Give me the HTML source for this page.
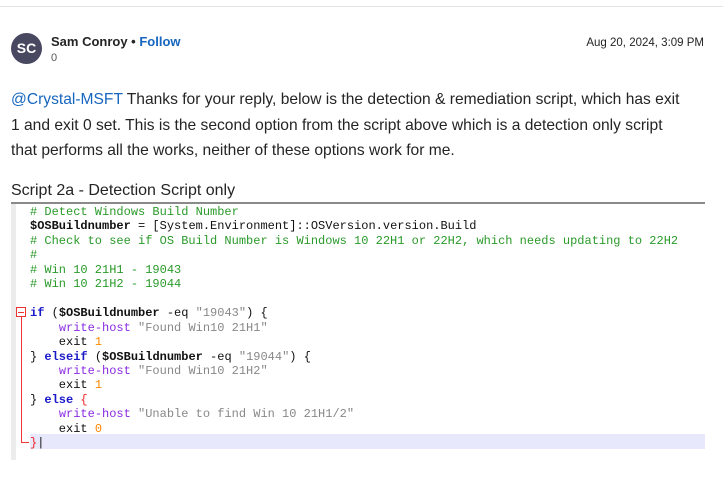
<!DOCTYPE html>
<html><head><style>
body{margin:0;width:723px;height:480px;background:#fff;font-family:"Segoe UI","Liberation Sans",sans-serif;color:#242424;position:relative;overflow:hidden}
.top{position:absolute;left:0;top:6px;width:723px;height:1px;background:#e4e4e4}
.av{position:absolute;left:11px;top:33px;width:31px;height:31px;border-radius:50%;background:#484860;color:#fff;font-weight:bold;font-size:14px;line-height:31px;text-align:center}
.name{position:absolute;left:51px;top:34px;font-size:13px;font-weight:600}
.name span{color:#1666bf}
.zero{position:absolute;left:51px;top:52px;font-size:11px;color:#555}
.date{position:absolute;right:19px;top:37px;font-size:11.5px}
.body{position:absolute;left:11px;top:87px;font-size:15.6px;line-height:25.5px;width:700px}
.body a{color:#1666bf}
.s2{position:absolute;left:11px;top:182px;font-size:16px}
.img{position:absolute;left:11px;top:202px;width:694px;height:256px;border-top:2px solid #8a8a8a}
.gut{position:absolute;left:0;top:0;width:5px;height:256px;background:#ececec}
.hl{position:absolute;left:19px;top:230px;width:675px;height:15px;background:#e8e8fc}
pre{position:absolute;left:19px;top:1px;margin:0;font-family:"Liberation Mono","Courier New",monospace;font-size:12px;line-height:14.45px;color:#111}
.c{color:#2a9a2a}.k{color:#1a1ac8;font-weight:bold}.w{color:#8a2be2}.s{color:#888}.n{color:#ff8800}.b{font-weight:bold}.r{color:#e22}
.fold{position:absolute;left:5px;top:103px;width:8px;height:8px;border:1px solid #e33}
.fold:after{content:"";position:absolute;left:1px;top:3.5px;width:6px;height:1px;background:#e33}
.vl{position:absolute;left:10px;top:113px;width:1px;height:125px;background:#e33}
.hz{position:absolute;left:10px;top:238px;width:8px;height:1px;background:#e33}
</style></head><body>
<div class="top"></div>
<div class="av">SC</div>
<div class="name">Sam Conroy • <span>Follow</span></div>
<div class="zero">0</div>
<div class="date">Aug 20, 2024, 3:09 PM</div>
<div class="body"><a>@Crystal-MSFT</a> Thanks for your reply, below is the detection &amp; remediation script, which has exit<br>1 and exit 0 set. This is the second option from the script above which is a detection only script<br>that performs all the works, neither of these options work for me.</div>
<div class="s2">Script 2a - Detection Script only</div>
<div class="img"><div class="gut"></div><div class="hl"></div>
<div class="fold"></div><div class="vl"></div><div class="hz"></div>
<pre><span class="c"># Detect Windows Build Number</span>
<span class="b">$OSBuildnumber</span> = [System.Environment]::OSVersion.version.Build
<span class="c"># Check to see if OS Build Number is Windows 10 22H1 or 22H2, which needs updating to 22H2</span>
<span class="c">#</span>
<span class="c"># Win 10 21H1 - 19043</span>
<span class="c"># Win 10 21H2 - 19044</span>

<span class="k">if</span> (<span class="b">$OSBuildnumber</span> -eq <span class="s">"19043"</span>) {
    <span class="w">write-host</span> <span class="s">"Found Win10 21H1"</span>
    exit <span class="n">1</span>
} <span class="k">elseif</span> (<span class="b">$OSBuildnumber</span> -eq <span class="s">"19044"</span>) {
    <span class="w">write-host</span> <span class="s">"Found Win10 21H2"</span>
    exit <span class="n">1</span>
} <span class="k">else</span> <span class="r">{</span>
    <span class="w">write-host</span> <span class="s">"Unable to find Win 10 21H1/2"</span>
    exit <span class="n">0</span>
<span class="r">}</span>|</pre>
</div>
</body></html>
